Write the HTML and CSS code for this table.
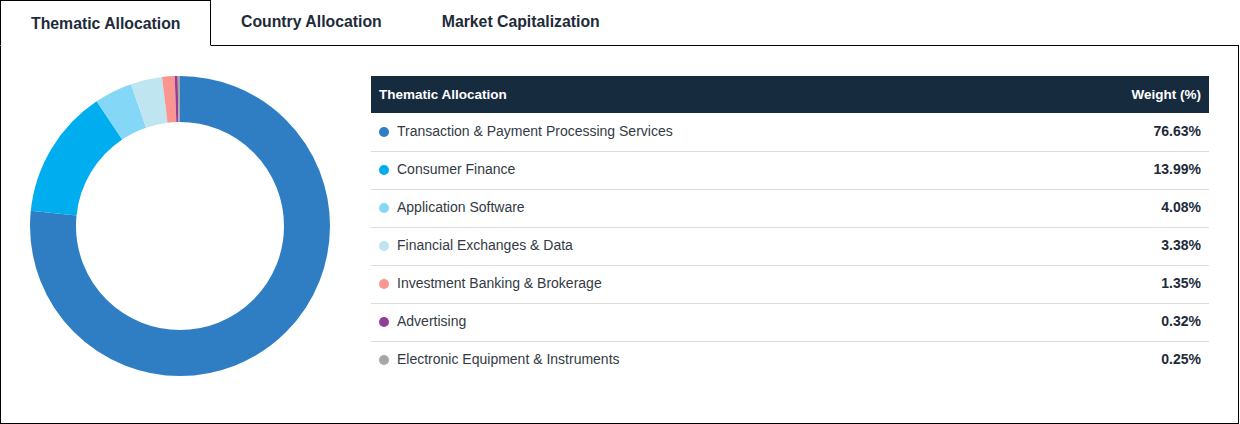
FILE: index.html
```html
<!DOCTYPE html>
<html lang="en">
<head>
<meta charset="utf-8">
<title>Thematic Allocation</title>
<link rel="stylesheet" href="styles.css">
</head>
<body>
<div class="widget">
  <div class="tabs">
    <div class="tab active">Thematic Allocation</div>
    <div class="tab">Country Allocation</div>
    <div class="tab">Market Capitalization</div>
    <div class="tab-fill"></div>
  </div>
  <div class="panel">
    <div class="chart">
      <svg width="300" height="300" viewBox="0 0 300 300">
        <g transform="rotate(-90 150 150)" fill="none" stroke-width="46">
          <circle cx="150" cy="150" r="127" pathLength="100" stroke="#2f7ec4" stroke-dasharray="76.63 100" stroke-dashoffset="0"/>
          <circle cx="150" cy="150" r="127" pathLength="100" stroke="#00adef" stroke-dasharray="13.99 100" stroke-dashoffset="-76.63"/>
          <circle cx="150" cy="150" r="127" pathLength="100" stroke="#84d7f7" stroke-dasharray="4.08 100" stroke-dashoffset="-90.62"/>
          <circle cx="150" cy="150" r="127" pathLength="100" stroke="#bee5f0" stroke-dasharray="3.38 100" stroke-dashoffset="-94.70"/>
          <circle cx="150" cy="150" r="127" pathLength="100" stroke="#fa9590" stroke-dasharray="1.35 100" stroke-dashoffset="-98.08"/>
          <circle cx="150" cy="150" r="127" pathLength="100" stroke="#933d98" stroke-dasharray="0.32 100" stroke-dashoffset="-99.43"/>
          <circle cx="150" cy="150" r="127" pathLength="100" stroke="#a6a6a6" stroke-dasharray="0.25 100" stroke-dashoffset="-99.75"/>
        </g>
      </svg>
    </div>
    <table class="alloc">
      <thead>
        <tr><th class="name">Thematic Allocation</th><th class="weight">Weight (%)</th></tr>
      </thead>
      <tbody>
        <tr><td class="name"><span class="dot c1"></span>Transaction &amp; Payment Processing Services</td><td class="weight">76.63%</td></tr>
        <tr><td class="name"><span class="dot c2"></span>Consumer Finance</td><td class="weight">13.99%</td></tr>
        <tr><td class="name"><span class="dot c3"></span>Application Software</td><td class="weight">4.08%</td></tr>
        <tr><td class="name"><span class="dot c4"></span>Financial Exchanges &amp; Data</td><td class="weight">3.38%</td></tr>
        <tr><td class="name"><span class="dot c5"></span>Investment Banking &amp; Brokerage</td><td class="weight">1.35%</td></tr>
        <tr><td class="name"><span class="dot c6"></span>Advertising</td><td class="weight">0.32%</td></tr>
        <tr><td class="name"><span class="dot c7"></span>Electronic Equipment &amp; Instruments</td><td class="weight">0.25%</td></tr>
      </tbody>
    </table>
  </div>
</div>
</body>
</html>
```

FILE: styles.css
```css
* { box-sizing: border-box; }
html, body { margin: 0; padding: 0; background: #fff; }
body {
  font-family: "Liberation Sans", Arial, sans-serif;
  color: #1d2b3a;
  width: 1240px;
  height: 424px;
}
.widget {
  width: 1239px;
  display: flex;
  flex-direction: column;
}
.tabs {
  display: flex;
  height: 46px;
}
.tab {
  padding: 0 30px;
  font-size: 15.8px;
  font-weight: 700;
  color: #1d2b3a;
  line-height: 43px;
  border-bottom: 1px solid #000;
  white-space: nowrap;
}
.tab.active {
  border: 1px solid #000;
  border-bottom: 1px solid transparent;
  padding: 0 0 0 30px;
  line-height: 45px;
  width: 211px;
}
.tab-fill {
  flex: 1;
  border-bottom: 1px solid #000;
}
.panel {
  height: 378px;
  border: 1px solid #000;
  border-top: none;
  display: flex;
  align-items: flex-start;
  padding: 30px 29px 0 29px;
}
.chart {
  width: 300px;
  height: 300px;
  flex: none;
}
.chart svg { display: block; }
.alloc {
  margin-left: 41px;
  flex: 1;
  border-collapse: collapse;
  font-size: 14px;
}
.alloc th {
  background: #172b3f;
  color: #fff;
  font-weight: 700;
  height: 37px;
  padding: 0 8px;
  font-size: 13.5px;
}
.alloc th.name { text-align: left; }
.alloc th.weight, .alloc td.weight { text-align: right; }
.alloc td {
  height: 38px;
  padding: 0 8px 2px 8px;
  border-bottom: 1px solid #dcdcdc;
  color: #333a45;
}
.alloc tbody tr:last-child td { border-bottom: none; }
.alloc td.weight {
  font-weight: 700;
  color: #1d2b3a;
}
.dot {
  display: inline-block;
  width: 10px;
  height: 10px;
  border-radius: 50%;
  margin-right: 8px;
  vertical-align: -1px;
}
.c1 { background: #2f7ec4; }
.c2 { background: #00adef; }
.c3 { background: #84d7f7; }
.c4 { background: #bee5f0; }
.c5 { background: #fa9590; }
.c6 { background: #933d98; }
.c7 { background: #a6a6a6; }
```
